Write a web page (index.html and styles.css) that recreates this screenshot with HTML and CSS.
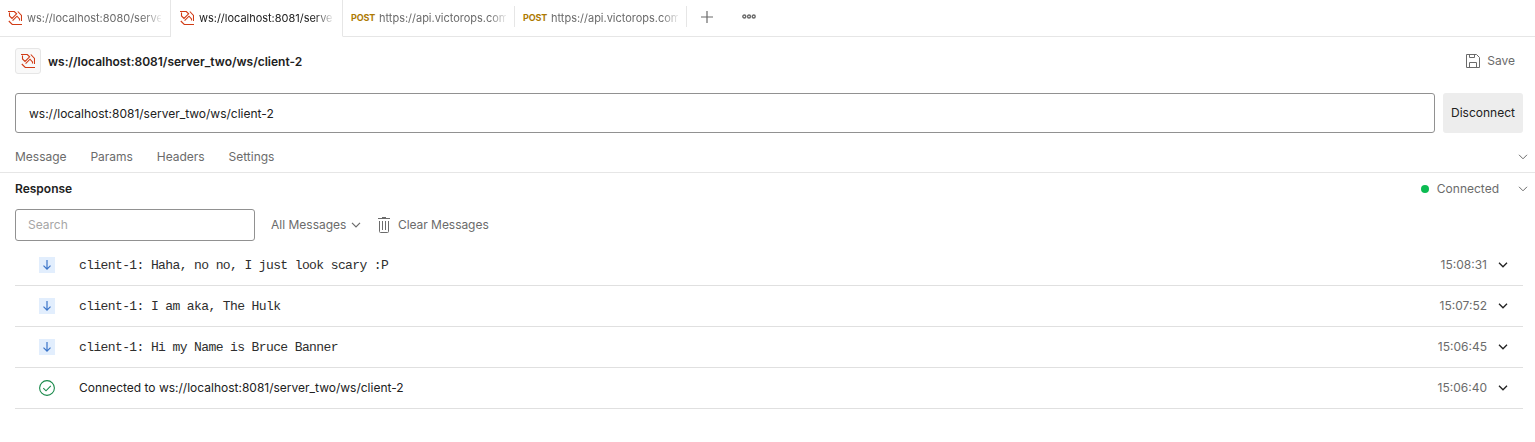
FILE: index.html
```html
<!DOCTYPE html>
<html lang="en">
<head>
<meta charset="utf-8">
<title>WebSocket request</title>
<link rel="stylesheet" href="styles.css">
</head>
<body>
<svg width="0" height="0" class="defs">
  <symbol id="ws" viewBox="0 0 14 14"><path d="M0 .5H6.3L8.6 2.8L4 7.4L1.5 5V1.5M9.8 .5L13.5 4.5V10M.8 10L4.3 13.5H14M4.6 9.6L9 5.2L11.5 8V9.5"/></symbol>
  <symbol id="chev" viewBox="0 0 10 6"><path d="M1 .8L5 4.8L9 .8"/></symbol>
  <symbol id="down" viewBox="0 0 16 16"><path d="M8 3V12M4.5 8.7L8 12.2L11.5 8.7"/></symbol>
</svg>
<nav class="tabs">
  <div class="tab first"><svg class="ws"><use href="#ws"/></svg><span class="label">ws://localhost:8080/server</span></div>
  <div class="tab active"><svg class="ws"><use href="#ws"/></svg><span class="label">ws://localhost:8081/server</span></div>
  <div class="tab post"><b>POST</b><span class="label">https://api.victorops.com</span></div>
  <div class="tab post"><b>POST</b><span class="label">https://api.victorops.com</span></div>
  <div class="tools">
    <svg class="plus" viewBox="0 0 12 12"><path d="M6 0V12M0 6H12"/></svg>
    <svg class="more" viewBox="0 0 14 5"><circle cx="2.3" cy="2.5" r="1.5"/><circle cx="7" cy="2.5" r="1.5"/><circle cx="11.7" cy="2.5" r="1.5"/></svg>
  </div>
</nav>
<header class="title">
  <span class="badge"><svg class="ws"><use href="#ws"/></svg></span>
  <h1>ws://localhost:8081/server_two/ws/client-2</h1>
  <span class="save"><svg viewBox="0 0 14 14"><path d="M.5 .5H10.5L13.5 3.5V13.5H.5ZM3.5 .5V3.5H8.5V.5M3.5 13.5V8.5H10.5V13.5"/></svg><span>Save</span></span>
</header>
<div class="urlbar"><div class="url"><span>ws://localhost:8081/server_two/ws/client-2</span></div><button class="disconnect">Disconnect</button></div>
<div class="sections"><span>Message</span><span>Params</span><span>Headers</span><span>Settings</span><svg class="chev"><use href="#chev"/></svg></div>
<div class="response"><h2>Response</h2><i class="dot"></i><span class="state">Connected</span><svg class="chev"><use href="#chev"/></svg></div>
<div class="filters">
  <div class="search"><span>Search</span></div>
  <span class="all">All Messages</span><svg class="chev"><use href="#chev"/></svg>
  <svg class="trash" viewBox="0 0 12 16"><path d="M0 1.5H12M4 .5H8M1.5 4V14.5Q1.5 15.5 2.5 15.5H9.5Q10.5 15.5 10.5 14.5V4M4.5 4V13M7.5 4V13"/></svg>
  <span class="clear">Clear Messages</span>
</div>
<ul class="log">
  <li><svg class="in"><use href="#down"/></svg><code>client-1: Haha, no no, I just look scary :P</code><time>15:08:31</time><svg class="chev"><use href="#chev"/></svg></li>
  <li><svg class="in"><use href="#down"/></svg><code>client-1: I am aka, The Hulk</code><time>15:07:52</time><svg class="chev"><use href="#chev"/></svg></li>
  <li><svg class="in"><use href="#down"/></svg><code>client-1: Hi my Name is Bruce Banner</code><time>15:06:45</time><svg class="chev"><use href="#chev"/></svg></li>
  <li><svg class="ok" viewBox="0 0 16 16"><circle cx="8" cy="8" r="7.4"/><path d="M4.3 8.2L7 10.8L11.8 5.8"/></svg><span class="text">Connected to ws://localhost:8081/server_two/ws/client-2</span><time>15:06:40</time><svg class="chev"><use href="#chev"/></svg></li>
</ul>
</body>
</html>
```
FILE: styles.css
```css
* { box-sizing: border-box; }
body { margin: 0; background: #fff; color: #212121; font: 12px/16px Inter, sans-serif; overflow: hidden; }
svg { fill: none; stroke: currentColor; flex: none; }
.defs { position: absolute; }
.tabs { display: flex; height: 37px; color: #6b6b6b; }
.tab { display: flex; align-items: center; width: 172px; padding: 0 10px 0 9px; border-bottom: 1px solid #e6e6e6; }
.tab.first { width: 171px; padding: 0 9px 0 8px; border-right: 1px solid #e6e6e6; }
.tab.active { color: #212121; border-right: 1px solid #e6e6e6; border-bottom-color: transparent; }
.tab .label { flex: 1; overflow: hidden; white-space: nowrap; font-size: 11px; letter-spacing: -.02px; margin-left: 5px; mask-image: linear-gradient(to right, #000 87%, transparent 102%); }
.tab.post { padding: 0 9px 0 8px; background: linear-gradient(#e6e6e6, #e6e6e6) right 6px / 1px 21px no-repeat; }
.post b { color: #ad7a03; font-size: 9px; font-weight: 700; letter-spacing: -.15px; }
.tab.post .label { margin-left: 4px; }
.ws { width: 14px; height: 14px; color: #d13b15; stroke-width: 1.1; }
.tools { flex: 1; display: flex; align-items: center; gap: 29px; padding: 0 0 3px 14px; border-bottom: 1px solid #e6e6e6; }
.plus { width: 12px; height: 12px; stroke-width: 1.2; }
.more { width: 14px; height: 5px; stroke-width: 1.4; }
.title { display: flex; align-items: center; height: 48px; padding: 0 20px 0 15px; }
.badge { display: flex; align-items: center; justify-content: center; width: 26px; height: 26px; border: 1px solid #e6e6e6; border-radius: 3px; background: #f9f9f9; }
h1, h2 { margin: 0; font-size: 12px; line-height: 16px; font-weight: 600; }
h1 { margin-left: 7px; padding-top: 2px; }
.save { display: flex; align-items: center; gap: 7px; margin-left: auto; color: #6b6b6b; }
.save svg { width: 14px; height: 14px; }
.urlbar { display: flex; gap: 8px; height: 48px; padding: 8px 12px 0 15px; }
.url { flex: 1; display: flex; align-items: center; padding: 2px 0 0 13px; border: 1px solid #919191; border-radius: 3px; }
.disconnect { width: 80px; padding: 0; border: 0; border-radius: 3px; background: #ededed; color: #212121; font: inherit; }
.sections { display: flex; align-items: center; height: 40px; padding: 8px 7px 0 15px; border-bottom: 1px solid #e6e6e6; color: #6b6b6b; gap: 23.8px; }
.chev { width: 10px; height: 6px; }
.sections .chev { margin-left: auto; }
.response { display: flex; align-items: center; height: 32px; padding: 0 7px 0 15px; color: #6b6b6b; }
h2 { color: #212121; }
.dot { width: 8px; height: 8px; border-radius: 50%; background: #0cbb52; margin: 0 8px 0 auto; }
.state { margin-right: 19px; }
.filters { display: flex; align-items: center; height: 40px; padding: 4px 15px; color: #6b6b6b; }
.search { display: flex; align-items: center; width: 240px; height: 32px; padding-left: 12px; border: 1px solid #919191; border-radius: 3px; color: #a6a6a6; margin-right: 16px; }
.filters .chev { margin-left: 5px; stroke-width: 1.2; }
.trash { width: 12px; height: 16px; margin: 0 7.5px 0 17px; }
.clear { letter-spacing: -.04px; }
.log { list-style: none; margin: 0; padding: 0 12px 0 15px; }
.log li { display: flex; align-items: center; height: 41px; padding: 0 15px 0 24px; border-bottom: 1px solid #e0e0e0; }
.in { width: 16px; height: 16px; background: #e2eefd; color: #3a74c9; stroke-width: 1.2; }
.ok { width: 16px; height: 16px; color: #18894a; stroke-width: 1.1; }
code, .text { margin-left: 24px; white-space: pre; }
code { padding-top: 2px; color: #2e2e2e; font: 13px/16px "Liberation Mono", monospace; letter-spacing: -.61px; }
time { margin-left: auto; margin-right: 11px; color: #6b6b6b; }
.log .chev { stroke-width: 1.3; }
```
